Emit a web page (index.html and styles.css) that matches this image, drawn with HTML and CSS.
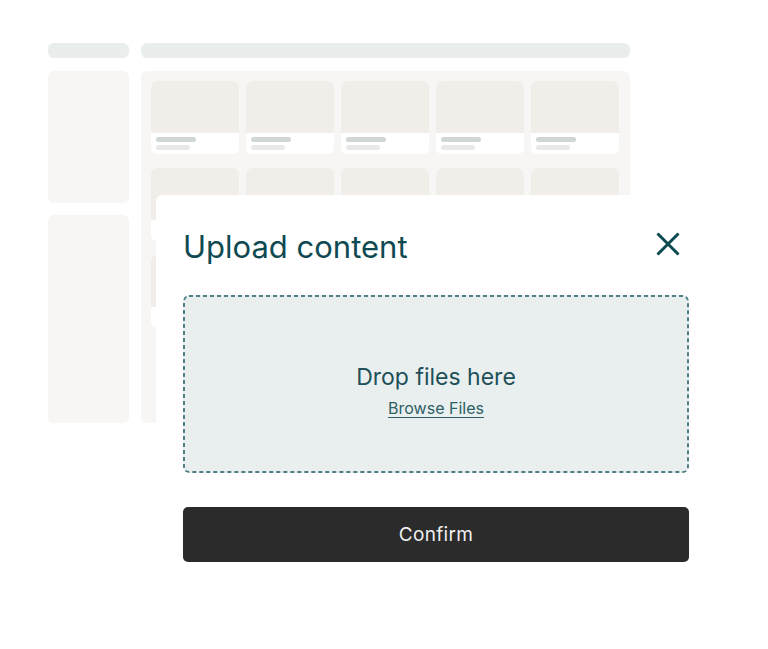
FILE: index.html
```html
<!doctype html>
<html>
  <head>
    <title>Upload content</title>
    <link rel="stylesheet" href="styles.css">
  </head>
  <body>
    <div class="stage">
      <div class="mock">
        <div class="mockRow">
          <div class="side-bar"></div>
          <div class="top-bar"></div>
        </div>
        <div class="mockRow mockBody">
          <div class="sideColumn">
            <div class="sidePanel panel-short"></div>
            <div class="sidePanel panel-tall"></div>
          </div>
          <div class="mainPanel">
            <div class="cardGrid">
              <div class="tile"><div class="tile-image"></div><div class="tile-text"><span class="line-a"></span><span class="line-b"></span></div></div>
              <div class="tile"><div class="tile-image"></div><div class="tile-text"><span class="line-a"></span><span class="line-b"></span></div></div>
              <div class="tile"><div class="tile-image"></div><div class="tile-text"><span class="line-a"></span><span class="line-b"></span></div></div>
              <div class="tile"><div class="tile-image"></div><div class="tile-text"><span class="line-a"></span><span class="line-b"></span></div></div>
              <div class="tile"><div class="tile-image"></div><div class="tile-text"><span class="line-a"></span><span class="line-b"></span></div></div>
              <div class="tile"><div class="tile-image"></div><div class="tile-text"><span class="line-a"></span><span class="line-b"></span></div></div>
              <div class="tile"><div class="tile-image"></div><div class="tile-text"><span class="line-a"></span><span class="line-b"></span></div></div>
              <div class="tile"><div class="tile-image"></div><div class="tile-text"><span class="line-a"></span><span class="line-b"></span></div></div>
              <div class="tile"><div class="tile-image"></div><div class="tile-text"><span class="line-a"></span><span class="line-b"></span></div></div>
              <div class="tile"><div class="tile-image"></div><div class="tile-text"><span class="line-a"></span><span class="line-b"></span></div></div>
              <div class="tile"><div class="tile-image"></div><div class="tile-text"><span class="line-a"></span><span class="line-b"></span></div></div>
              <div class="tile"><div class="tile-image"></div><div class="tile-text"><span class="line-a"></span><span class="line-b"></span></div></div>
              <div class="tile"><div class="tile-image"></div><div class="tile-text"><span class="line-a"></span><span class="line-b"></span></div></div>
              <div class="tile"><div class="tile-image"></div><div class="tile-text"><span class="line-a"></span><span class="line-b"></span></div></div>
              <div class="tile"><div class="tile-image"></div><div class="tile-text"><span class="line-a"></span><span class="line-b"></span></div></div>
            </div>
          </div>
        </div>
      </div>

      <div class="modal">
        <div class="modal-header">
          <h1>Upload content</h1>
          <svg class="close_icon" width="24" height="24" viewBox="0 0 24 24">
            <path d="M1.5 1.5 L22.5 22.5 M22.5 1.5 L1.5 22.5" stroke="#0d4a50" stroke-width="3" fill="none"/>
          </svg>
        </div>
        <div class="dropZone">
          <p class="drop-text">Drop files here</p>
          <a class="browse-link" href="#">Browse Files</a>
        </div>
        <button class="confirm_button">Confirm</button>
      </div>
    </div>
  </body>
</html>
```

FILE: styles.css
```css
body {
  margin: 0;
  background-color: #FFFFFF;
  font-family: Inter, "Noto Sans", sans-serif;
}
.stage {
  position: relative;
  width: 768px;
  height: 649px;
  overflow: hidden;
}

/* background mock of the app */
.mock {
  padding: 43px 0 0 48px;
}
.mockRow {
  display: flex;
  gap: 12px;
}
.mockBody {
  margin-top: 13px;
}
.side-bar {
  width: 81px;
  height: 15px;
  border-radius: 6px;
  background-color: #E9EEED;
}
.top-bar {
  width: 489px;
  height: 15px;
  border-radius: 6px;
  background-color: #E9EEED;
}
.sideColumn {
  width: 81px;
  display: flex;
  flex-direction: column;
  gap: 12px;
}
.sidePanel {
  border-radius: 6px;
  background-color: #F7F6F5;
}
.panel-short {
  height: 132px;
}
.panel-tall {
  height: 208px;
}
.mainPanel {
  width: 479px;
  height: 342px;
  padding: 10px 0 0 10px;
  border-radius: 6px;
  background-color: #F7F6F5;
}
.cardGrid {
  display: grid;
  grid-template-columns: repeat(5, 88px);
  grid-auto-rows: 73px;
  column-gap: 7px;
  row-gap: 14px;
}
.tile {
  border-radius: 6px;
  overflow: hidden;
  background-color: #FFFFFF;
  display: flex;
  flex-direction: column;
}
.tile-image {
  height: 52px;
  background-color: #F1EEEA;
}
.tile-text {
  padding: 4px 5px 0;
  display: flex;
  flex-direction: column;
  gap: 3px;
}
.line-a {
  width: 40px;
  height: 5px;
  border-radius: 3px;
  background-color: #D1D7D6;
}
.line-b {
  width: 34px;
  height: 5px;
  border-radius: 3px;
  background-color: #E8EAE9;
}

/* upload dialog */
.modal {
  position: absolute;
  left: 156px;
  top: 195px;
  width: 506px;
  padding: 34px 28px 28px 27px;
  background-color: #FFFFFF;
  border-radius: 6px;
}
.modal-header {
  display: flex;
  justify-content: space-between;
  align-items: flex-start;
}
.modal-header h1 {
  margin: 0;
  font-size: 31px;
  line-height: 36px;
  font-weight: 400;
  color: #0F4A52;
}
.close_icon {
  margin-top: 3px;
  margin-right: 9px;
}
.dropZone {
  margin-top: 30px;
  height: 178px;
  border-radius: 6px;
  background-color: #E9EFEF;
  background-image: url("data:image/svg+xml,%3Csvg xmlns='http://www.w3.org/2000/svg' width='506' height='178'%3E%3Crect x='1' y='1' width='504' height='176' rx='5' fill='none' stroke='%234F7F85' stroke-width='2' stroke-dasharray='4 3'/%3E%3C/svg%3E");
  display: flex;
  flex-direction: column;
  align-items: center;
  justify-content: center;
}
.drop-text {
  margin: 12px 0 0;
  font-size: 23px;
  line-height: 28px;
  color: #1E5058;
}
.browse-link {
  margin-top: 7px;
  font-size: 16px;
  color: #2D5F66;
  text-decoration: underline;
  text-underline-offset: 3px;
}
.confirm_button {
  display: block;
  margin-top: 34px;
  width: 506px;
  height: 55px;
  border: none;
  border-radius: 5px;
  background-color: #2B2B2B;
  color: #F0F0F0;
  font-family: Inter, "Noto Sans", sans-serif;
  font-size: 19px;
  letter-spacing: 0.3px;
}
```
